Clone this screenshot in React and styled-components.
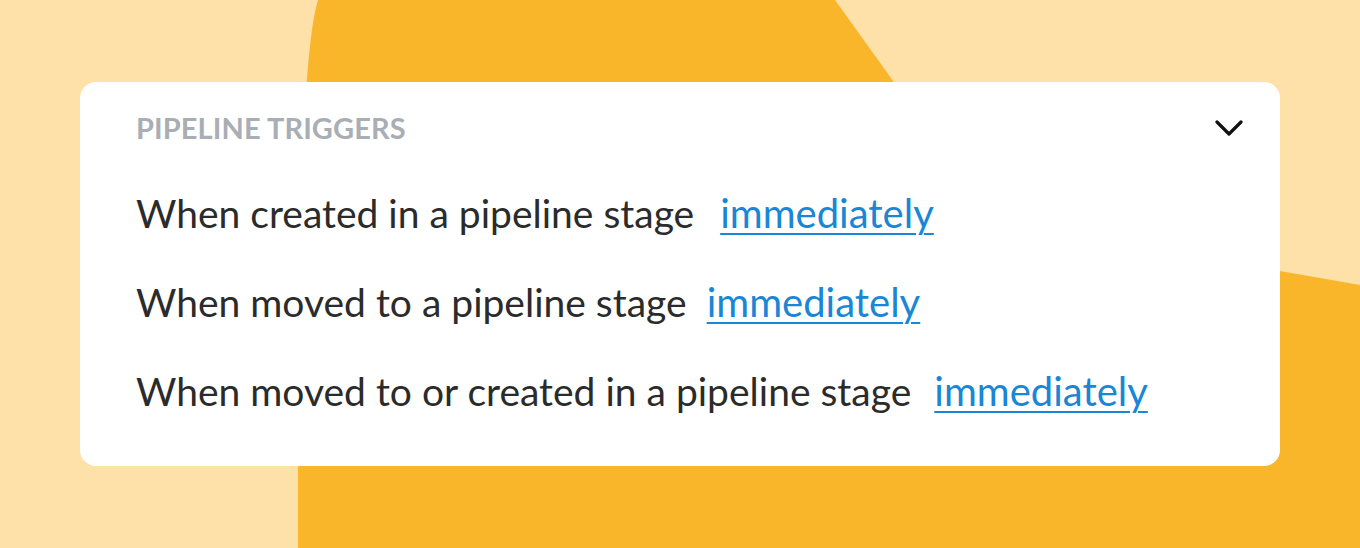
import React from 'react';
import styled, { createGlobalStyle } from 'styled-components';

const Global = createGlobalStyle`
  html, body {
    margin: 0;
    padding: 0;
  }
  body {
    font-family: Lato, "Open Sans", sans-serif;
    background: #fde1a8;
  }
`

const Page = styled.div`
  position: relative;
  width: 1360px;
  height: 548px;
  overflow: hidden;
  background: #fde1a8;
  padding: 82px 80px;
  box-sizing: border-box;
`

const Blob = styled.svg`
  position: absolute;
  left: 0;
  top: 0;
  width: 1360px;
  height: 548px;
`

const Card = styled.div`
  position: relative;
  width: 1200px;
  height: 384px;
  box-sizing: border-box;
  background: #ffffff;
  border-radius: 16px;
  padding: 31px 37px 30px 56px;
`

const Header = styled.div`
  display: flex;
  justify-content: space-between;
  align-items: center;
  height: 29px;
`

const Title = styled.div`
  font-size: 29px;
  line-height: 1;
  font-weight: 700;
  color: #a9aeb5;
  letter-spacing: 0.1px;
`

const Chevron = styled.svg`
  width: 28px;
  height: 18px;
  display: block;
`

const List = styled.div`
  display: flex;
  flex-direction: column;
  margin-top: 27px;
`

const Row = styled.div`
  font-size: 39px;
  line-height: 89px;
  color: #2b2b2b;
  white-space: nowrap;
`

const Link = styled.a`
  margin-left: ${p => p.gap}px;
  font-size: 40px;
  color: #1a86d6;
  text-decoration: underline;
  text-decoration-thickness: 2px;
  text-underline-offset: 5px;
  cursor: pointer;
`

const triggers = [
  { label: 'When created in a pipeline stage', gap: 26 },
  { label: 'When moved to a pipeline stage', gap: 20 },
  { label: 'When moved to or created in a pipeline stage', gap: 23 },
]

export default function App() {
  return (
    <>
      <Global />
      <Page>
        <Blob viewBox="0 0 1360 548">
          <path
            d="M318 0 L835 0 L1000 230 L1280 271 L1360 285 L1360 548 L298 548 C298 300 300 60 318 0 Z"
            fill="#f9b62a"
          />
        </Blob>
        <Card>
          <Header>
            <Title>PIPELINE TRIGGERS</Title>
            <Chevron viewBox="0 0 28 18">
              <polyline points="2,3 14,15 26,3" fill="none" stroke="#111" strokeWidth="3.2" strokeLinecap="round" strokeLinejoin="round" />
            </Chevron>
          </Header>
          <List>
            {triggers.map((t, i) => (
              <Row key={i}>
                {t.label}
                <Link gap={t.gap}>immediately</Link>
              </Row>
            ))}
          </List>
        </Card>
      </Page>
    </>
  );
}
